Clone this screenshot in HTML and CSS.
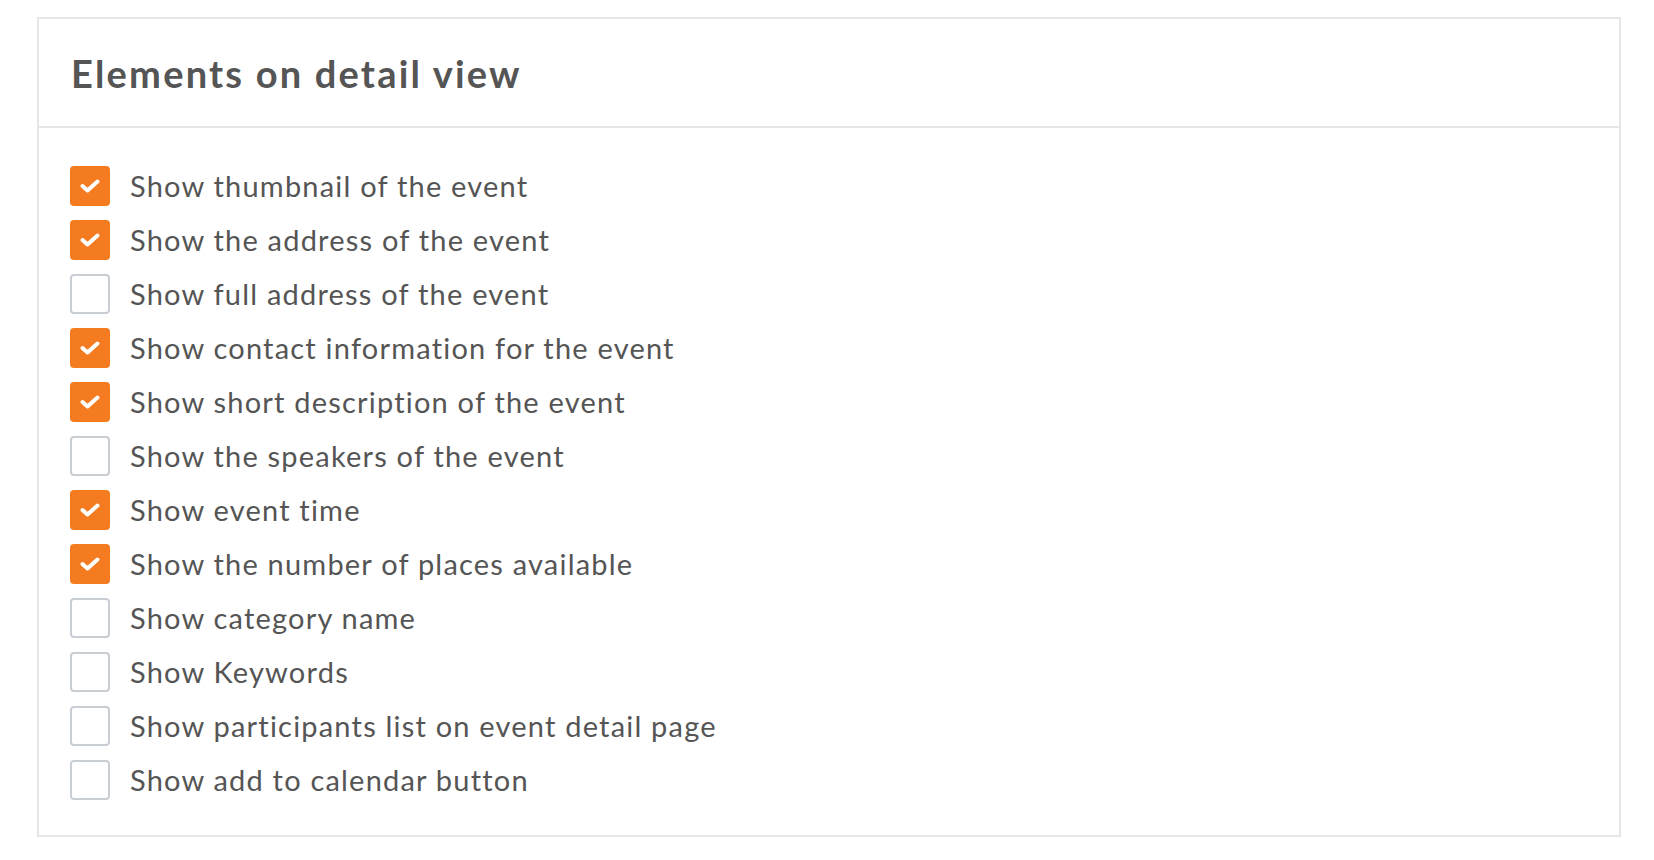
FILE: index.html
```html
<!DOCTYPE html>
<html lang="en">
<head>
<meta charset="utf-8">
<title>Elements on detail view</title>
<link rel="stylesheet" href="styles.css">
</head>
<body>
<section class="card">
  <header class="card-header">
    <h2 class="card-title">Elements on detail view</h2>
  </header>
  <ul class="options">
    <li class="option"><span class="box checked"><svg viewBox="0 0 20 14" class="tick"><path d="M2.5 7 L7.5 11.5 L17.5 2.5"/></svg></span><span class="label">Show thumbnail of the event</span></li>
    <li class="option"><span class="box checked"><svg viewBox="0 0 20 14" class="tick"><path d="M2.5 7 L7.5 11.5 L17.5 2.5"/></svg></span><span class="label">Show the address of the event</span></li>
    <li class="option"><span class="box"></span><span class="label">Show full address of the event</span></li>
    <li class="option"><span class="box checked"><svg viewBox="0 0 20 14" class="tick"><path d="M2.5 7 L7.5 11.5 L17.5 2.5"/></svg></span><span class="label">Show contact information for the event</span></li>
    <li class="option"><span class="box checked"><svg viewBox="0 0 20 14" class="tick"><path d="M2.5 7 L7.5 11.5 L17.5 2.5"/></svg></span><span class="label">Show short description of the event</span></li>
    <li class="option"><span class="box"></span><span class="label">Show the speakers of the event</span></li>
    <li class="option"><span class="box checked"><svg viewBox="0 0 20 14" class="tick"><path d="M2.5 7 L7.5 11.5 L17.5 2.5"/></svg></span><span class="label">Show event time</span></li>
    <li class="option"><span class="box checked"><svg viewBox="0 0 20 14" class="tick"><path d="M2.5 7 L7.5 11.5 L17.5 2.5"/></svg></span><span class="label">Show the number of places available</span></li>
    <li class="option"><span class="box"></span><span class="label">Show category name</span></li>
    <li class="option"><span class="box"></span><span class="label">Show Keywords</span></li>
    <li class="option"><span class="box"></span><span class="label">Show participants list on event detail page</span></li>
    <li class="option"><span class="box"></span><span class="label">Show add to calendar button</span></li>
  </ul>
</section>
</body>
</html>
```
FILE: styles.css
```css
html, body {
  margin: 0;
  padding: 0;
  background: #ffffff;
}
body {
  font-family: "Lato", "Open Sans", sans-serif;
  color: #555555;
  padding: 17px 0 0 37px;
}
.card {
  width: 1580px;
  border: 2px solid #e6e6e6;
}
.card-header {
  height: 107px;
  border-bottom: 2px solid #e6e6e6;
  display: flex;
  align-items: center;
  padding-left: 32px;
}
.card-title {
  margin: 0;
  font-size: 38px;
  font-weight: 700;
  color: #555555;
  letter-spacing: 2.2px;
}
.options {
  list-style: none;
  margin: 0;
  padding: 31px 0 28px 31px;
}
.option {
  height: 54px;
  display: flex;
  align-items: center;
  gap: 20px;
}
.box {
  width: 40px;
  height: 40px;
  box-sizing: border-box;
  border: 2px solid #c9ced5;
  border-radius: 4px;
  display: flex;
  align-items: center;
  justify-content: center;
  flex: none;
}
.box.checked {
  background: #f47b20;
  border-color: #f47b20;
}
.tick {
  width: 20px;
  height: 14px;
  fill: none;
  stroke: #ffffff;
  stroke-width: 4;
  stroke-linecap: round;
  stroke-linejoin: round;
}
.label {
  font-size: 29px;
  letter-spacing: 1.2px;
  color: #555555;
  position: relative;
  top: -1px;
}
```
